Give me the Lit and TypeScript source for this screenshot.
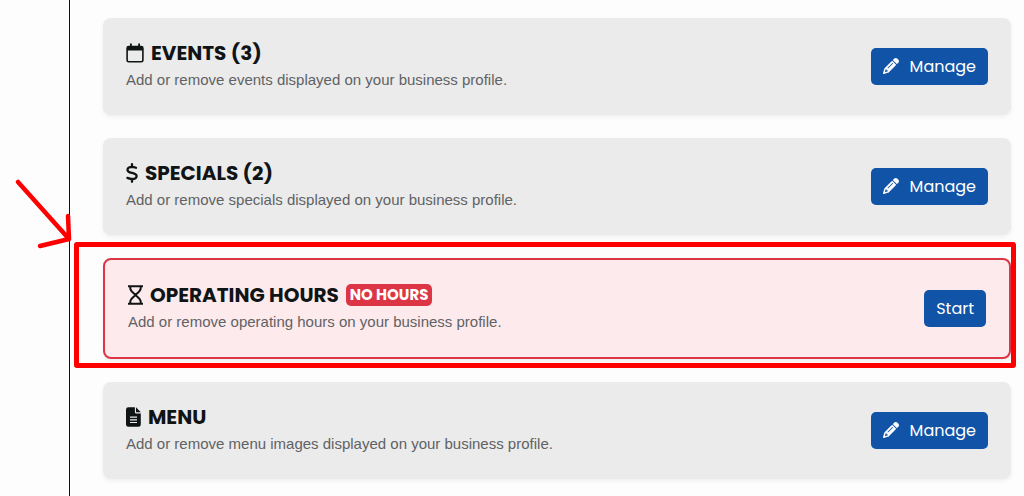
import { LitElement, html, css, svg, nothing } from "lit";
import { customElement, property } from "lit/decorators.js";
import { classMap } from "lit/directives/class-map.js";

type IconName = "calendar" | "dollar" | "hourglass" | "file" | "pencil";

interface Section {
  icon: IconName;
  title: string;
  text: string;
  action: string;
  badge?: string;
}

const SECTIONS: Section[] = [
  { icon: "calendar", title: "EVENTS (3)", text: "Add or remove events displayed on your business profile.", action: "Manage" },
  { icon: "dollar", title: "SPECIALS (2)", text: "Add or remove specials displayed on your business profile.", action: "Manage" },
  { icon: "hourglass", title: "OPERATING HOURS", text: "Add or remove operating hours on your business profile.", action: "Start", badge: "NO HOURS" },
  { icon: "file", title: "MENU", text: "Add or remove menu images displayed on your business profile.", action: "Manage" },
];

const ICONS: Record<IconName, { width: number; height: number; shape: unknown }> = {
  calendar: {
    width: 18,
    height: 20,
    shape: svg`<path fill-rule="evenodd" d="M4 0.5h1.8v2.3h6.4V0.5H14v2.3h1.3A2.4 2.4 0 0 1 17.7 5.2v12A2.4 2.4 0 0 1 15.3 19.6H2.7A2.4 2.4 0 0 1 .3 17.2v-12A2.4 2.4 0 0 1 2.7 2.8H4zM1.9 7.6v9.5a.9.9 0 0 0 .9.9h12.4a.9.9 0 0 0 .9-.9V7.6z"/>`,
  },
  dollar: {
    width: 12,
    height: 20,
    shape: svg`<path fill="none" stroke="currentColor" stroke-width="2.3" stroke-linecap="round" stroke-linejoin="round" d="M6 1.2v3M6 15.8v3M10 4.8C8.6 4.2 7.2 3.9 5.8 3.9C3.2 3.9 1.5 5 1.5 6.9C1.5 9 3.7 9.4 6 9.9C8.5 10.4 10.6 11 10.6 13.1C10.6 15 8.8 16.1 6.2 16.1C4.5 16.1 2.9 15.5 1.4 14.9"/>`,
  },
  hourglass: {
    width: 15,
    height: 20,
    shape: svg`<path fill="none" stroke="currentColor" stroke-width="2" stroke-linejoin="round" d="M0 1.3h15M0 18.7h15M2.3 1.3v2C2.3 6.5 5.7 8 7.5 10C9.3 8 12.7 6.5 12.7 3.3v-2M2.3 18.7v-2C2.3 13.5 5.7 12 7.5 10C9.3 12 12.7 13.5 12.7 16.7v2"/>`,
  },
  file: {
    width: 15,
    height: 20,
    shape: svg`<path fill-rule="evenodd" d="M2.4 .3H8.9v4.9a1.2 1.2 0 0 0 1.2 1.2h4.7v11a2.4 2.4 0 0 1-2.4 2.4h-10A2.4 2.4 0 0 1 0 17.4V2.7A2.4 2.4 0 0 1 2.4.3zM4 9.6v1.1h7V9.6zM4 12.3v1.1h7v-1.1zM4 15v1.1h7V15zM10 .3L14.8 5.2H10z"/>`,
  },
  pencil: {
    width: 16,
    height: 16,
    shape: svg`<path transform="scale(0.03125)" d="M410.3 231l11.3-11.3-33.9-33.9-62.1-62.1L291.7 89.8l-11.3 11.3-22.6 22.6L58.6 322.9c-10.4 10.4-18 23.3-22.2 37.4L1 480.7c-2.5 8.4-.2 17.5 6.1 23.7s15.3 8.5 23.7 6.1l120.3-35.4c14.1-4.2 27-11.8 37.4-22.2L387.7 253.7 410.3 231zM160 399.4l-9.1 22.7c-4 3.1-8.5 5.4-13.3 6.9L59.4 452l23-78.1c1.4-4.9 3.8-9.4 6.9-13.3l22.7-9.1v32c0 8.8 7.2 16 16 16h32zM362.7 18.7L348.3 33.2 325.7 55.8 314.3 67.1l33.9 33.9 62.1 62.1 33.9 33.9 11.3-11.3 22.6-22.6 14.5-14.5c25-25 25-65.5 0-90.5L453.3 18.7c-25-25-65.5-25-90.5 0zm-47.4 168l-144 144c-6.2 6.2-16.4 6.2-22.6 0s-6.2-16.4 0-22.6l144-144c6.2-6.2 16.4-6.2 22.6 0s6.2 16.4 0 22.6z"/>`,
  },
};

@customElement("app-icon")
class AppIcon extends LitElement {
  @property() name: IconName = "file";

  static styles = css`
    :host {
      display: inline-flex;
      flex: none;
    }
    .glyph {
      display: block;
      fill: currentColor;
    }
  `;

  render() {
    const { width, height, shape } = ICONS[this.name];
    return html`<svg class="glyph" width=${width} height=${height} viewBox="0 0 ${width} ${height}" aria-hidden="true">${shape}</svg>`;
  }
}

@customElement("section-card")
class SectionCard extends LitElement {
  @property({ attribute: false }) section!: Section;

  static styles = css`
    :host {
      display: block;
    }
    .card {
      position: relative;
      display: flex;
      align-items: center;
      justify-content: space-between;
      gap: 16px;
      padding: 23px 23px 24px;
      border-radius: 8px;
      background: #ebebeb;
      box-shadow: 0 2px 4px rgba(0, 0, 0, 0.06);
    }
    .alert {
      border: 2px solid #dc3545;
      background: #fdeaec;
    }
    .title {
      display: flex;
      align-items: center;
      flex-wrap: wrap;
      gap: 7px;
      margin: 0 0 4px;
      font-size: 20px;
      line-height: 24px;
      font-weight: 700;
      color: #101414;
    }
    .badge {
      padding: 0 4px;
      border-radius: 5px;
      background: #dc3545;
      color: #fff;
      font-size: 15px;
      line-height: 22px;
    }
    .text {
      margin: 0;
      font: 15px/22px "Liberation Sans", Arial, sans-serif;
      color: #606264;
    }
    .action {
      display: inline-flex;
      align-items: center;
      flex: none;
      gap: 11px;
      height: 37px;
      padding: 0 12px;
      border: 0;
      border-radius: 5px;
      background: #1153a6;
      color: #fff;
      font: inherit;
      font-size: 16px;
      cursor: pointer;
    }
    .highlight {
      position: absolute;
      inset: -18px -7px -11px -31px;
      border: 5px solid #ff0000;
      border-radius: 3px;
      pointer-events: none;
    }
  `;

  render() {
    const s = this.section;
    return html`
      <section class=${classMap({ card: true, alert: !!s.badge })}>
        <div>
          <h2 class="title">
            <app-icon name=${s.icon}></app-icon>
            <span>${s.title}</span>
            ${s.badge ? html`<span class="badge">${s.badge}</span>` : nothing}
          </h2>
          <p class="text">${s.text}</p>
        </div>
        <button class="action" type="button">
          ${s.badge ? nothing : html`<app-icon name="pencil"></app-icon>`}<span>${s.action}</span>
        </button>
        ${s.badge ? html`<div class="highlight"></div>` : nothing}
      </section>
    `;
  }
}

@customElement("app-root")
class AppRoot extends LitElement {
  static styles = css`
    :host {
      position: relative;
      display: grid;
      grid-template-columns: 70px 1fr;
      min-height: 100vh;
      box-sizing: border-box;
      background: #fdfdfd;
      font-family: Poppins, Inter, sans-serif;
    }
    .rail {
      border-right: 1px solid #111;
    }
    .sections {
      display: flex;
      flex-direction: column;
      gap: 23px;
      padding: 18px 13px 16px 33px;
    }
    .arrow {
      position: absolute;
      left: 14px;
      top: 178px;
      fill: none;
      stroke: #ff0000;
      stroke-width: 4.5;
      stroke-linecap: round;
      stroke-linejoin: round;
    }
  `;

  render() {
    return html`
      <aside class="rail"></aside>
      <main class="sections">
        ${SECTIONS.map((s) => html`<section-card .section=${s}></section-card>`)}
      </main>
      <svg class="arrow" width="62" height="72" viewBox="0 0 62 72" aria-hidden="true">
        <path d="M4 4L55 61M54 38L55 61L26 68" />
      </svg>
    `;
  }
}
